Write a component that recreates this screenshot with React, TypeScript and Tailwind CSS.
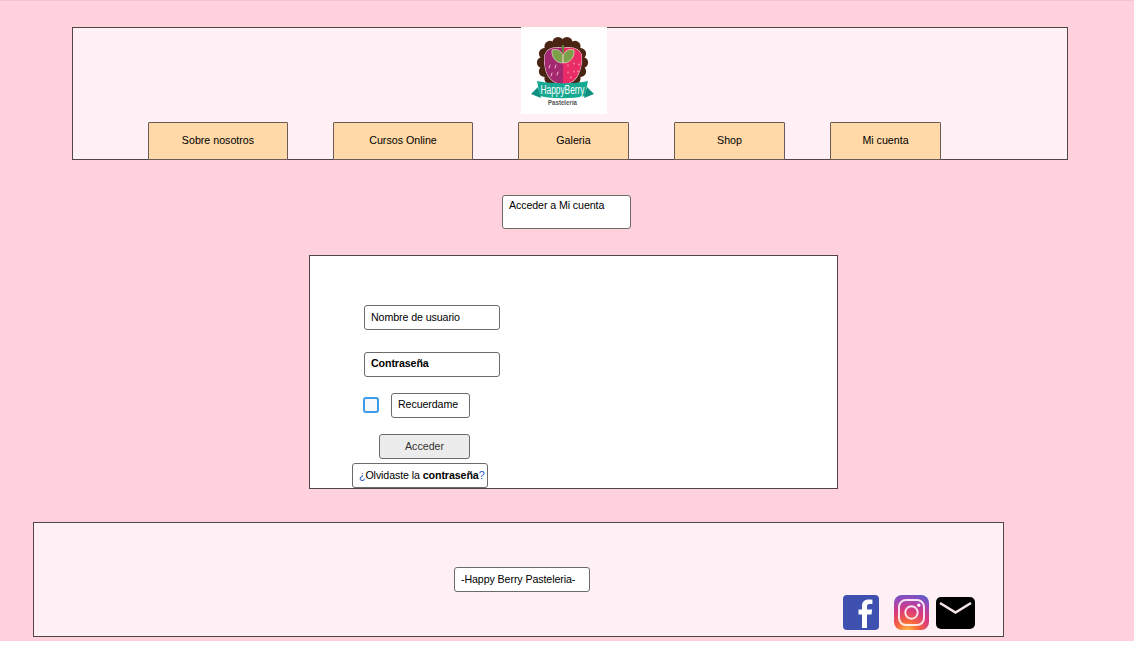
const font = "font-['Liberation_Sans',Arial,sans-serif]";

const bumps = Array.from({ length: 14 }, (_, i) => {
  const a = (i / 14) * Math.PI * 2;
  return [41.5 + 20 * Math.cos(a), 35.5 + 20.5 * Math.sin(a)];
});

function Logo() {
  return (
    <svg width="86" height="87" viewBox="0 0 86 87" className="block bg-white">
      {bumps.map(([x, y], i) => (
        <circle key={i} cx={x} cy={y} r="5.6" fill="#4a2412" />
      ))}
      <circle cx="41.5" cy="35.5" r="21" fill="#4a2412" />
      <path d="M42 21 C34 20 26 21 24 28 C22.5 38 25 49 32 54 C36 56.5 40 57 42 57 C44 57 48 56.5 52 54 C58 49 61.5 38 60.5 28 C58 21 50 20 42 21 Z" fill="none" stroke="#f3d7e2" strokeWidth="1.2" />
      <path d="M42 21 C34 20 26 21 24 28 C22.5 38 25 49 32 54 C36 56.5 40 57 42 57 Z" fill="#a3286f" />
      <path d="M42 21 C50 20 58 21 60.5 28 C61.5 38 58 49 52 54 C48 56.5 44 57 42 57 Z" fill="#ea2c66" />
      <g stroke="#f6c6d8" strokeWidth="0.9" strokeLinecap="round">
        <path d="M29 38 L28 41" /><path d="M35 38 L34 41" /><path d="M31 46 L30 49" />
        <path d="M37 45 L36 48" />
        <path d="M47 38 L47 39" /><path d="M53 36 L53 37" /><path d="M58 37 L58 38" />
        <path d="M47 45 L47 46" /><path d="M53 44 L53 45" /><path d="M57 44 L57 45" />
        <path d="M50 50 L50 51" />
      </g>
      <path d="M41.5 36 C35 36 30 30 31 23 C37 21 41 25 42 29 Z" fill="#7da04a" stroke="#f0f3dc" strokeWidth="0.6" />
      <path d="M42.5 36 C49 36 54 30 53 23 C47 21 43 25 42 29 Z" fill="#7da04a" stroke="#f0f3dc" strokeWidth="0.6" />
      <rect x="41" y="18" width="2" height="8" fill="#5f8a3a" />
      <path d="M17 60 L10 67 L20 71 Z" fill="#0f8f7f" />
      <path d="M66 60 L73 67 L63 71 Z" fill="#0f8f7f" />
      <path d="M16 54 C30 57 54 57 67 54 L64 69 C52 72 31 72 19 69 Z" fill="#17a892" />
      <text x="41.5" y="67" textAnchor="middle" fontSize="12" fontFamily="'Liberation Sans', sans-serif" fill="#ffffff" textLength="44" lengthAdjust="spacingAndGlyphs">HappyBerry</text>
      <text x="41.5" y="78" textAnchor="middle" fontSize="8" fontWeight="bold" fontFamily="'Liberation Sans', sans-serif" fill="#555555" textLength="29" lengthAdjust="spacingAndGlyphs">Pastelería</text>
    </svg>
  );
}

function NavButton({ label, wide }: { label: string; wide?: boolean }) {
  return (
    <div className={`${wide ? "w-[140px]" : "w-[111px]"} h-[38px] pb-[1px] flex items-center justify-center bg-[#ffd9a8] border border-[#6b5a58] rounded-[1px] text-black`}>
      {label}
    </div>
  );
}

function Field({ children, className }: { children: React.ReactNode; className?: string }) {
  return (
    <div className={`h-[25px] flex items-center bg-white border border-[#6b6b6b] rounded-[3px] text-black tracking-[-0.1px] whitespace-pre ${className ?? ""}`}>
      {children}
    </div>
  );
}

export default function App() {
  return (
    <div className={`${font} w-[1134px] h-[641px] bg-[#ffd1dc] border-t border-[#f3c4cf] text-[10.67px] leading-[13px] overflow-hidden`}>
      <header className="ml-[72px] mt-[26px] w-[996px] h-[133px] bg-[#fff0f5] border border-[#4f4549] flex flex-col">
        <div className="ml-[448px] -mt-px">
          <Logo />
        </div>
        <nav className="mt-[8px] pl-[75px] flex gap-[45px]">
          <NavButton label="Sobre nosotros" wide />
          <NavButton label="Cursos Online" wide />
          <NavButton label="Galeria" />
          <NavButton label="Shop" />
          <NavButton label="Mi cuenta" />
        </nav>
      </header>

      <div className="ml-[502px] mt-[35px] w-[129px] h-[34px] bg-white border border-[#6b6b6b] rounded-[3px] pl-[6px] pt-[3px] text-black tracking-[-0.1px]">
        Acceder a Mi cuenta
      </div>

      <main className="ml-[309px] mt-[26px] w-[529px] h-[234px] bg-white border border-[#4f4549] flex flex-col">
        <Field className="ml-[54px] mt-[49px] w-[136px] pl-[6px] pb-[1px]">Nombre de usuario</Field>
        <Field className="ml-[54px] mt-[22px] w-[136px] pl-[6px] pb-[3px] font-bold">Contraseña</Field>
        <div className="ml-[53px] mt-[16px] flex items-center gap-[12px]">
          <input type="checkbox" className="appearance-none -mt-[2px] w-[16px] h-[16px] bg-[#f8f9fb] border-2 border-[#3f9bea] rounded-[3px]" />
          <Field className="w-[79px] pl-[6px] pb-[3px]">Recuerdame</Field>
        </div>
        <button className="ml-[69px] mt-[16px] w-[91px] h-[25px] flex items-center justify-center bg-[#ececec] border border-[#6b6b6b] rounded-[3px] text-[#333333]">
          Acceder
        </button>
        <Field className="ml-[42px] mt-[4px] w-[136px] pl-[6px] pb-[1px]">
          <span className="text-[#1a56c4]">¿</span>
          <span>Olvidaste la </span>
          <span className="font-bold">contraseña</span>
          <span className="text-[#1a56c4]">?</span>
        </Field>
      </main>

      <footer className="ml-[33px] mt-[33px] w-[971px] h-[115px] bg-[#fff0f5] border border-[#4f4549] flex flex-col">
        <Field className="ml-[420px] mt-[44px] w-[136px] pl-[6px] pb-[1px]">-Happy Berry Pasteleria-</Field>
        <div className="ml-[809px] mt-[3px] flex items-center">
          <svg width="36" height="35" viewBox="0 0 36 35" className="block">
            <rect width="36" height="35" rx="4" fill="#3f51b0" />
            <path d="M24 33 V19.5 H28.5 L29.2 14.5 H24 V11.5 C24 10 24.6 9 26.5 9 H29.4 V4.7 C28.4 4.5 27 4.4 25.6 4.4 C21.4 4.4 19 6.8 19 11 V14.5 H15.5 V19.5 H19 V33 Z" fill="#ffffff" />
          </svg>
          <svg width="35" height="35" viewBox="0 0 35 35" className="block ml-[15px]">
            <defs>
              <radialGradient id="ig" cx="38%" cy="108%" r="115%">
                <stop offset="0%" stopColor="#fdd04a" />
                <stop offset="28%" stopColor="#f9673a" />
                <stop offset="58%" stopColor="#d9397f" />
                <stop offset="85%" stopColor="#9a48bb" />
                <stop offset="100%" stopColor="#5a5cc8" />
              </radialGradient>
            </defs>
            <rect width="35" height="35" rx="8" fill="url(#ig)" />
            <rect x="5" y="5" width="25" height="25" rx="7" fill="none" stroke="#fff" strokeWidth="2" opacity="0.85" />
            <circle cx="17.5" cy="17.5" r="6.2" fill="none" stroke="#fff" strokeWidth="2" opacity="0.85" />
            <circle cx="24.8" cy="10.2" r="1.6" fill="#fff" />
          </svg>
          <svg width="39" height="32" viewBox="0 0 39 32" className="block ml-[7px]">
            <rect width="39" height="32" rx="5" fill="#000000" />
            <path d="M4 6 L19.5 15.5 L35 6" fill="none" stroke="#f4e6e6" strokeWidth="2.6" />
          </svg>
        </div>
      </footer>
    </div>
  );
}
